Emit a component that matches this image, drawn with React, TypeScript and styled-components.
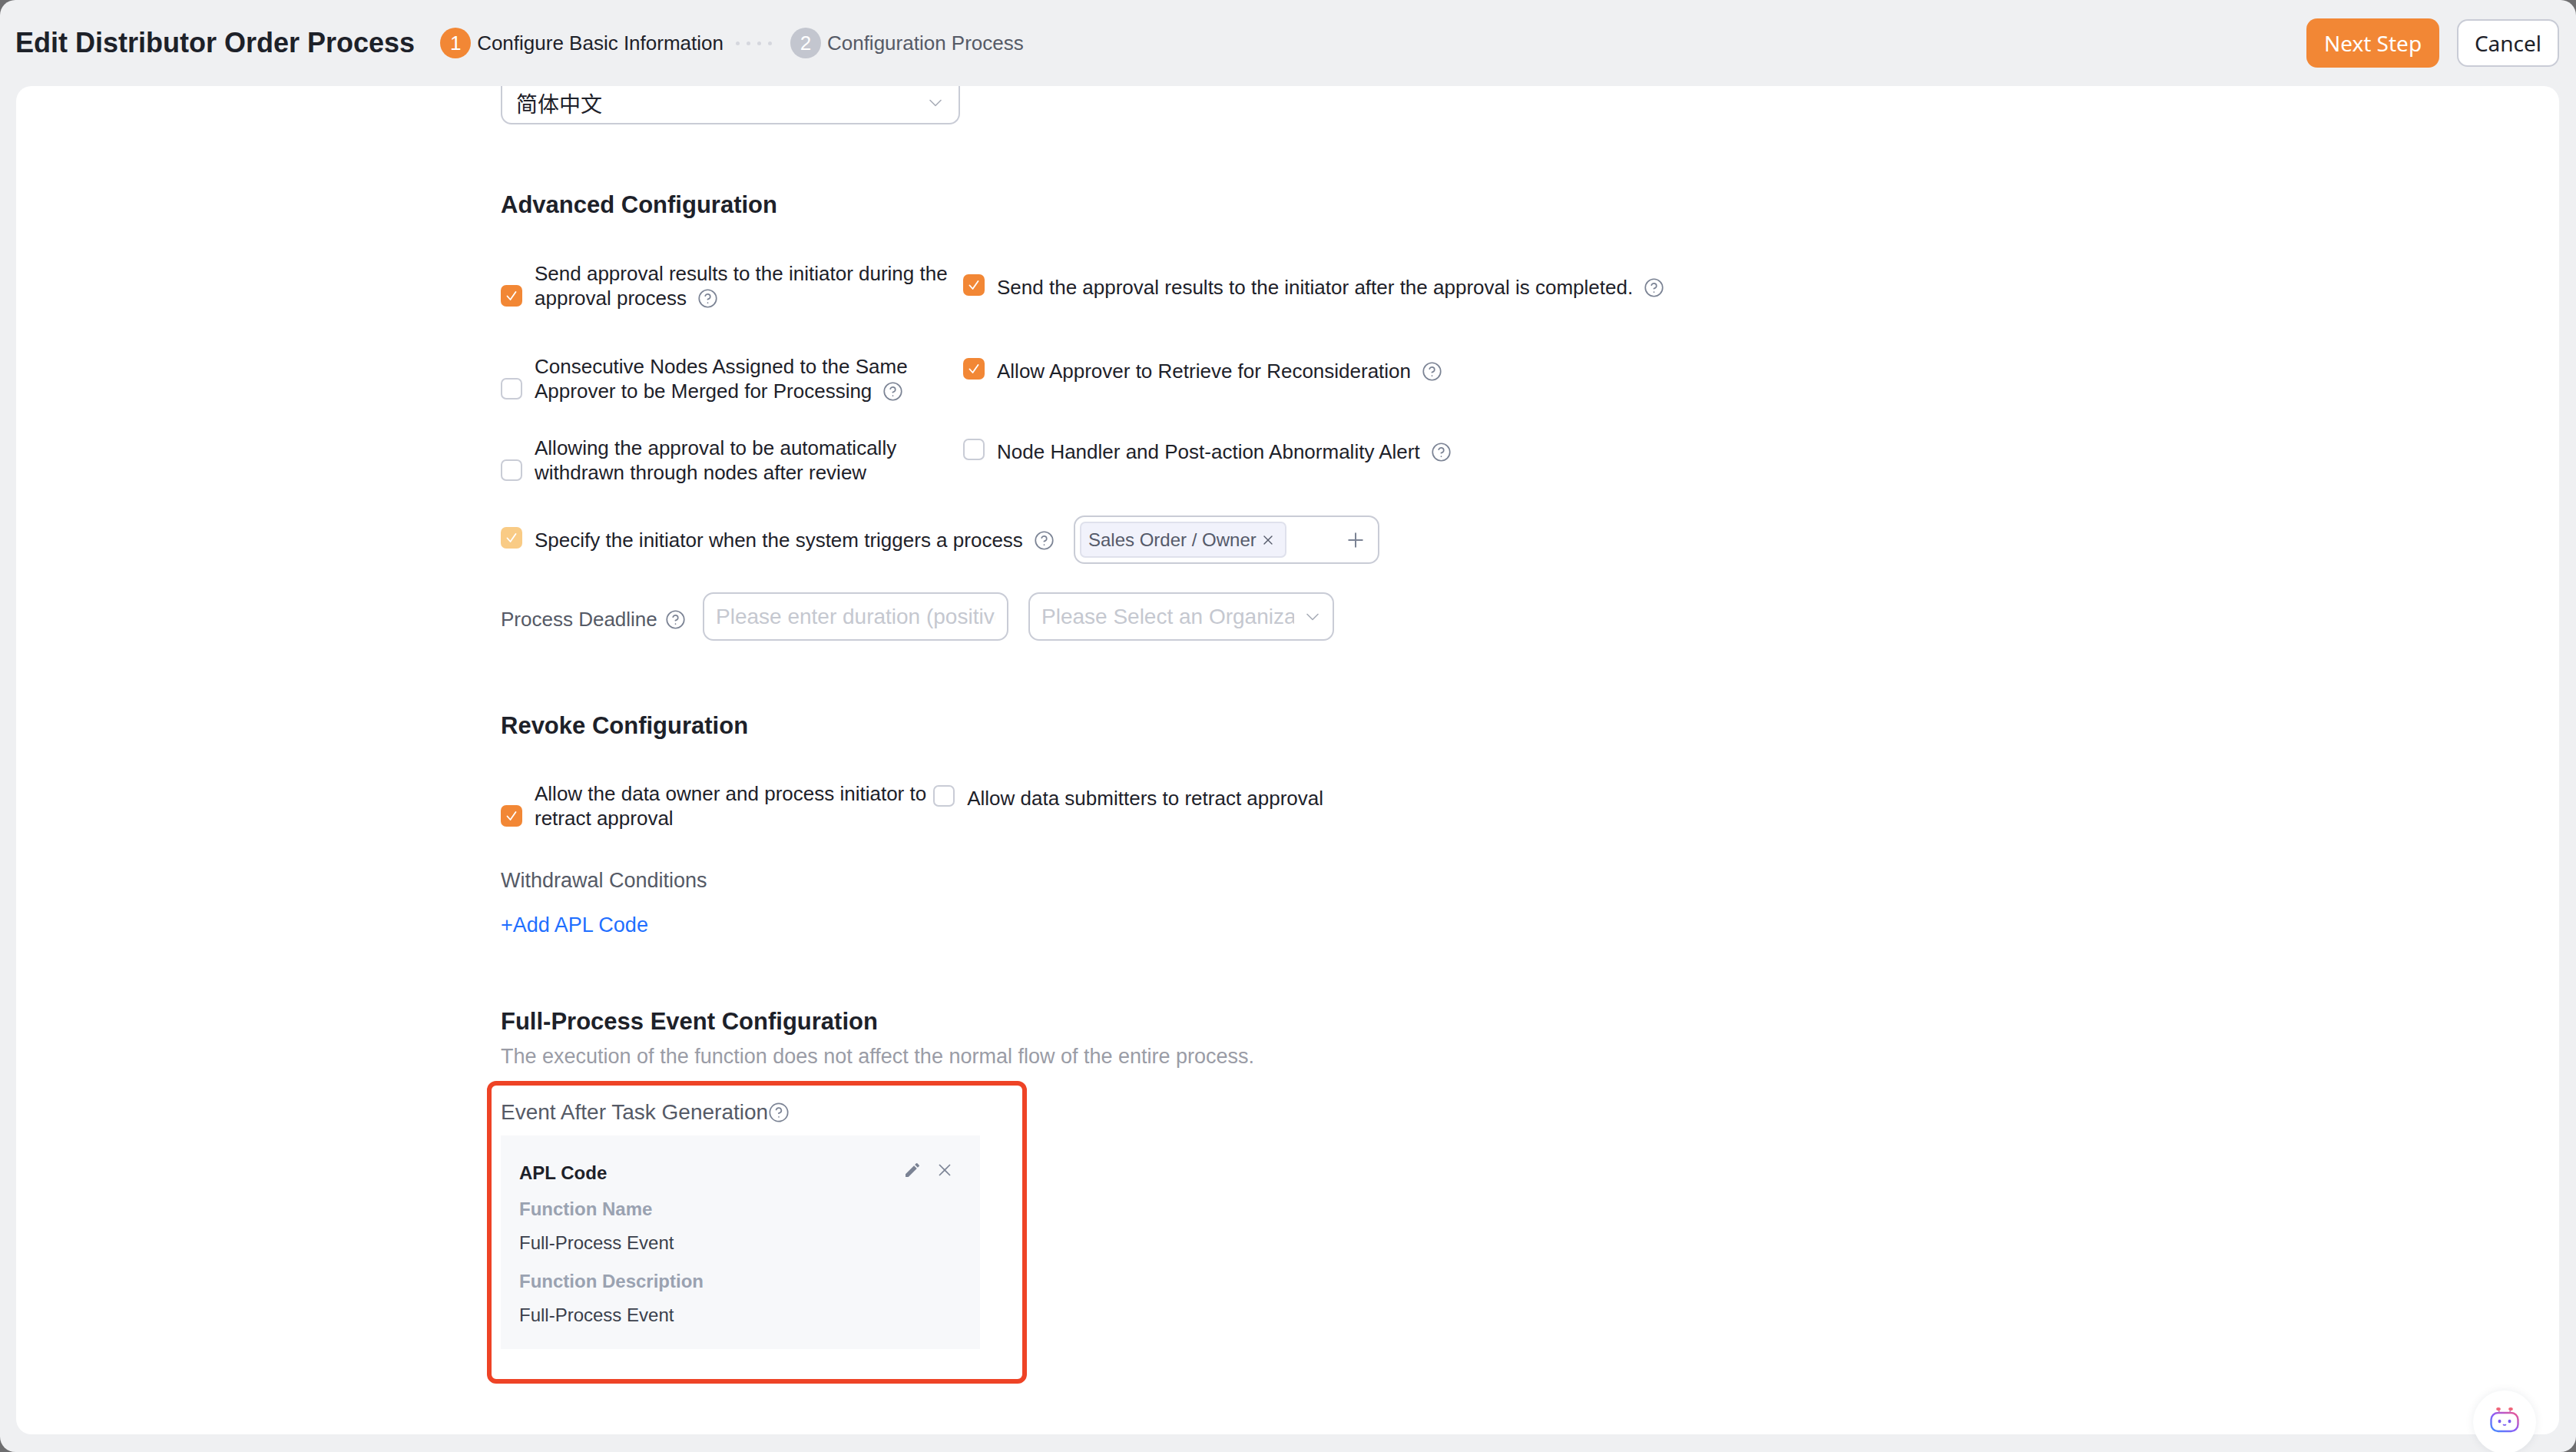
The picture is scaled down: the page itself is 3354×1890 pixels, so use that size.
import React from "react";
import styled, { createGlobalStyle } from "styled-components";
import { ChevronDown, CircleHelp, Plus, X } from "lucide-react";

const Global = createGlobalStyle`
  html, body { margin: 0; padding: 0; background: #6e6e70; }
  * { box-sizing: border-box; }
  #root { width: 3354px; height: 1890px; }
`;

const FONT = `"Liberation Sans", Arial, "Noto Sans CJK SC", sans-serif`;

const Win = styled.div`
  position: relative;
  width: 3354px;
  height: 1890px;
  background: #eff0f2;
  border-radius: 20px;
  overflow: hidden;
  font-family: ${FONT};
  font-size: 26px;
  color: #1d2129;
`;

const Header = styled.header`
  height: 112px;
  display: flex;
  align-items: center;
  padding: 0 22px 0 20px;
`;

const Title = styled.h1`
  margin: 0 33px 0 0;
  font-size: 36px;
  font-weight: 700;
  color: #1d2129;
  white-space: nowrap;
`;

const StepDot = styled.span<{ $active?: boolean }>`
  width: 40px;
  height: 40px;
  border-radius: 50%;
  display: flex;
  align-items: center;
  justify-content: center;
  margin-right: 8px;
  color: #fff;
  font-size: 26px;
  background: ${(p) => (p.$active ? "#f28735" : "#c3c6cf")};
`;

const StepLabel = styled.span<{ $active?: boolean }>`
  font-size: 26px;
  white-space: nowrap;
  color: ${(p) => (p.$active ? "#1d2129" : "#555a66")};
`;

const StepDots = styled.span`
  display: flex;
  gap: 9px;
  margin: 0 24px 0 16px;
  & > i {
    width: 5px;
    height: 5px;
    border-radius: 50%;
    background: #d5d7de;
  }
`;

const Actions = styled.div`
  margin-left: auto;
  display: flex;
  align-items: center;
  gap: 23px;
`;

const Primary = styled.button`
  width: 173px;
  height: 64px;
  border: none;
  border-radius: 14px;
  background: #f28735;
  color: #fff;
  font-family: "Noto Sans", sans-serif;
  font-size: 28px;
`;

const Secondary = styled.button`
  width: 133px;
  height: 62px;
  border: 2px solid #c9ccd6;
  border-radius: 14px;
  background: #fff;
  color: #1d2129;
  font-family: "Noto Sans", sans-serif;
  font-size: 28px;
`;

const Panel = styled.main`
  height: 1755px;
  margin: 0 22px 0 21px;
  padding-left: 631px;
  background: #fff;
  border-radius: 20px;
  overflow: hidden;
`;

const ClippedSelect = styled.div`
  width: 598px;
  height: 50px;
  display: flex;
  align-items: center;
  justify-content: space-between;
  padding: 0 16px 4px 18px;
  border: 2px solid #c9ccd6;
  border-top: none;
  border-radius: 0 0 14px 14px;
  font-size: 28px;
  color: #1d2129;
  & > svg { color: #a9adb8; }
`;

const Heading = styled.h2<{ $top: number }>`
  margin: ${(p) => p.$top}px 0 0;
  font-size: 31px;
  line-height: 44px;
  font-weight: 700;
  color: #1d2129;
`;

const CheckRow = styled.div<{ $top: number }>`
  display: flex;
  align-items: flex-start;
  margin-top: ${(p) => p.$top}px;
`;

const CheckItem = styled.div<{ $width?: number; $pad?: number }>`
  display: flex;
  align-items: flex-end;
  gap: 16px;
  flex: none;
  width: ${(p) => (p.$width ? `${p.$width}px` : "auto")};
  padding-top: ${(p) => p.$pad ?? 0}px;
`;

const Box = styled.span<{ $on?: boolean; $muted?: boolean }>`
  flex: none;
  width: 28px;
  height: 28px;
  margin-bottom: 5px;
  border-radius: 7px;
  display: flex;
  align-items: center;
  justify-content: center;
  border: 2px solid ${(p) => (p.$on ? "transparent" : "#c9ccd6")};
  background: ${(p) => (p.$on ? (p.$muted ? "#f9cb85" : "#f28735") : "#fff")};
  & > svg { display: block; }
`;

const CheckText = styled.span`
  line-height: 32px;
  font-size: 26px;
  color: #1d2129;
`;

const HelpIcon = styled(CircleHelp)<{ $left?: number }>`
  display: inline-block;
  vertical-align: -5px;
  width: 27px;
  height: 27px;
  margin-left: ${(p) => p.$left ?? 0}px;
  color: #7b8394;
  flex: none;
`;

const InitiatorRow = styled.div`
  display: flex;
  align-items: center;
  height: 63px;
  margin-top: 40px;
`;

const InitiatorItem = styled.div`
  display: flex;
  align-items: center;
  gap: 16px;
  width: 746px;
  & > span:first-child { margin-bottom: 0; margin-top: -6px; }
`;

const TagBox = styled.div`
  width: 398px;
  height: 63px;
  display: flex;
  align-items: center;
  justify-content: space-between;
  padding: 0 14px 0 6px;
  border: 2px solid #c9ccd6;
  border-radius: 14px;
  & > svg { color: #7b8394; }
`;

const Tag = styled.span`
  width: 269px;
  height: 47px;
  display: flex;
  align-items: center;
  justify-content: space-between;
  padding: 0 12px 0 9px;
  border: 2px solid #dfe1ec;
  border-radius: 7px;
  background: #f1f2fb;
  color: #555a6a;
  font-size: 24px;
  white-space: nowrap;
`;

const DeadlineRow = styled.div`
  display: flex;
  align-items: center;
  height: 63px;
  margin-top: 37px;
`;

const DeadlineLabel = styled.label`
  display: flex;
  align-items: center;
  width: 263px;
  padding-top: 8px;
  gap: 10px;
  color: #555a66;
  font-size: 26px;
  white-space: nowrap;
`;

const fieldCss = `
  width: 398px;
  height: 63px;
  border: 2px solid #c9ccd6;
  border-radius: 14px;
  background: #fff;
  font-size: 28px;
  color: #c5c8d0;
`;

const Field = styled.input`
  ${fieldCss}
  padding: 0 15px;
  font-family: ${FONT};
  &::placeholder { color: #c5c8d0; opacity: 1; }
`;

const PickerField = styled.div`
  ${fieldCss}
  margin-left: 26px;
  display: flex;
  align-items: center;
  gap: 10px;
  padding: 0 12px 0 15px;
  & > span { flex: 1; overflow: hidden; white-space: nowrap; }
  & > svg { color: #a9adb8; flex: none; }
`;

const Caption = styled.div<{ $top: number }>`
  margin-top: ${(p) => p.$top}px;
  line-height: 40px;
  font-size: 27px;
  color: #555a66;
`;

const AddLink = styled.a`
  display: block;
  margin-top: 18px;
  line-height: 40px;
  font-size: 27px;
  color: #1f6fff;
`;

const Description = styled.p`
  margin: 5px 0 0;
  line-height: 36px;
  font-size: 27px;
  color: #9a9ca6;
`;

const AnnotationFrame = styled.section`
  width: 703px;
  height: 394px;
  margin: 14px 0 0 -18px;
  padding: 15px 0 0 12px;
  border: 6px solid #ee4326;
  border-radius: 12px;
`;

const EventLabel = styled.div`
  display: flex;
  align-items: center;
  height: 40px;
  font-size: 28px;
  color: #555a66;
  & > svg { width: 28px; height: 28px; }
`;

const EventCard = styled.div`
  width: 624px;
  height: 278px;
  margin-top: 10px;
  padding: 31px 33px 0 24px;
  background: #f7f8fa;
`;

const CardHead = styled.div`
  display: flex;
  align-items: center;
  height: 36px;
  font-size: 24px;
  font-weight: 700;
  color: #1d2129;
`;

const CardTools = styled.div`
  margin-left: auto;
  margin-top: -8px;
  display: flex;
  align-items: center;
  gap: 17px;
  color: #7b8394;
`;

const FieldName = styled.div<{ $top: number }>`
  margin-top: ${(p) => p.$top}px;
  line-height: 36px;
  font-size: 24px;
  font-weight: 700;
  color: #9aa2b1;
`;

const FieldValue = styled.div`
  margin-top: 8px;
  line-height: 36px;
  font-size: 24px;
  color: #3a3f4b;
`;

const BotButton = styled.div`
  position: absolute;
  left: 3220px;
  top: 1810px;
  width: 82px;
  height: 82px;
  border-radius: 50%;
  display: flex;
  align-items: center;
  justify-content: center;
  background: #fff;
  box-shadow: 0 0 12px rgba(30, 40, 70, 0.08);
`;

const Tick = () => (
  <svg width="18" height="18" viewBox="0 0 18 18" fill="none">
    <path d="M3.5 9.5 7.5 14 14.5 4" stroke="#fff" strokeWidth="1.8" strokeLinecap="round" strokeLinejoin="round" />
  </svg>
);

const Check = ({ on, muted }: { on?: boolean; muted?: boolean }) => (
  <Box $on={on} $muted={muted}>{on ? <Tick /> : null}</Box>
);

const Pencil = () => (
  <svg width="24" height="24" viewBox="0 0 24 24" fill="currentColor">
    <path d="M3 17.25V21h3.75L17.81 9.94l-3.75-3.75L3 17.25zM20.71 7.04a1 1 0 0 0 0-1.41l-2.34-2.34a1 1 0 0 0-1.41 0l-1.83 1.83 3.75 3.75 1.83-1.83z" />
  </svg>
);

const Bot = () => (
  <svg width="38" height="34" viewBox="0 0 38 34" fill="none" style={{ marginTop: -6 }}>
    <defs>
      <linearGradient id="bot" x1="0" y1="1" x2="1" y2="0">
        <stop offset="0" stopColor="#3f8cff" />
        <stop offset="0.5" stopColor="#8f5cf5" />
        <stop offset="1" stopColor="#f0568c" />
      </linearGradient>
    </defs>
    <rect x="1.5" y="8" width="35" height="24" rx="9" stroke="url(#bot)" strokeWidth="2.4" />
    <path d="M11 3.5 12.5 8M27 3.5 25.5 8" stroke="#c76fb8" strokeWidth="1.4" />
    <ellipse cx="11" cy="3" rx="2.8" ry="2" fill="#f0657a" />
    <ellipse cx="27" cy="3" rx="2.8" ry="2" fill="#f0657a" />
    <ellipse cx="12.5" cy="19" rx="2" ry="2.3" fill="#7a5cf0" />
    <ellipse cx="25.5" cy="19" rx="2" ry="2.3" fill="#7a5cf0" />
    <path d="M17.5 23.5q1.5 1 3 0" stroke="#7a5cf0" strokeWidth="1.6" strokeLinecap="round" />
  </svg>
);

export default function App() {
  return (
    <>
      <Global />
      <Win>
        <Header>
          <Title>Edit Distributor Order Process</Title>
          <StepDot $active>1</StepDot>
          <StepLabel $active>Configure Basic Information</StepLabel>
          <StepDots><i /><i /><i /><i /></StepDots>
          <StepDot>2</StepDot>
          <StepLabel>Configuration Process</StepLabel>
          <Actions>
            <Primary>Next Step</Primary>
            <Secondary>Cancel</Secondary>
          </Actions>
        </Header>
        <Panel>
          <ClippedSelect>
            简体中文
            <ChevronDown size={28} strokeWidth={1.4} />
          </ClippedSelect>

          <Heading $top={83}>Advanced Configuration</Heading>

          <CheckRow $top={51}>
            <CheckItem $width={602}>
              <Check on />
              <CheckText>
                Send approval results to the initiator during the<br />
                approval process<HelpIcon $left={14} strokeWidth={1.5} />
              </CheckText>
            </CheckItem>
            <CheckItem $pad={17}>
              <Check on />
              <CheckText>
                Send the approval results to the initiator after the approval is completed.
                <HelpIcon $left={14} strokeWidth={1.5} />
              </CheckText>
            </CheckItem>
          </CheckRow>

          <CheckRow $top={57}>
            <CheckItem $width={602}>
              <Check />
              <CheckText>
                Consecutive Nodes Assigned to the Same<br />
                Approver to be Merged for Processing<HelpIcon $left={14} strokeWidth={1.5} />
              </CheckText>
            </CheckItem>
            <CheckItem $pad={5}>
              <Check on />
              <CheckText>
                Allow Approver to Retrieve for Reconsideration
                <HelpIcon $left={14} strokeWidth={1.5} />
              </CheckText>
            </CheckItem>
          </CheckRow>

          <CheckRow $top={42}>
            <CheckItem $width={602}>
              <Check />
              <CheckText>
                Allowing the approval to be automatically<br />
                withdrawn through nodes after review
              </CheckText>
            </CheckItem>
            <CheckItem $pad={4}>
              <Check />
              <CheckText>
                Node Handler and Post-action Abnormality Alert
                <HelpIcon $left={14} strokeWidth={1.5} />
              </CheckText>
            </CheckItem>
          </CheckRow>

          <InitiatorRow>
            <InitiatorItem>
              <Check on muted />
              <CheckText>
                Specify the initiator when the system triggers a process
                <HelpIcon $left={14} strokeWidth={1.5} />
              </CheckText>
            </InitiatorItem>
            <TagBox>
              <Tag>Sales Order / Owner<X size={20} strokeWidth={1.6} /></Tag>
              <Plus size={30} strokeWidth={1.6} />
            </TagBox>
          </InitiatorRow>

          <DeadlineRow>
            <DeadlineLabel>
              Process Deadline<HelpIcon strokeWidth={1.5} />
            </DeadlineLabel>
            <Field placeholder="Please enter duration (positive integer)" />
            <PickerField>
              <span>Please Select an Organization</span>
              <ChevronDown size={28} strokeWidth={1.4} />
            </PickerField>
          </DeadlineRow>

          <Heading $top={89}>Revoke Configuration</Heading>

          <CheckRow $top={50}>
            <CheckItem>
              <Check on />
              <CheckText>
                Allow the data owner and process initiator to<br />
                retract approval
              </CheckText>
            </CheckItem>
            <CheckItem $pad={5} style={{ marginLeft: 9 }}>
              <Check />
              <CheckText>Allow data submitters to retract approval</CheckText>
            </CheckItem>
          </CheckRow>

          <Caption $top={45}>Withdrawal Conditions</Caption>
          <AddLink>+Add APL Code</AddLink>

          <Heading $top={84}>Full-Process Event Configuration</Heading>
          <Description>The execution of the function does not affect the normal flow of the entire process.</Description>

          <AnnotationFrame>
            <EventLabel>
              Event After Task Generation<HelpIcon strokeWidth={1.5} />
            </EventLabel>
            <EventCard>
              <CardHead>
                APL Code
                <CardTools>
                  <Pencil />
                  <X size={26} strokeWidth={1.6} />
                </CardTools>
              </CardHead>
              <FieldName $top={11}>Function Name</FieldName>
              <FieldValue>Full-Process Event</FieldValue>
              <FieldName $top={14}>Function Description</FieldName>
              <FieldValue>Full-Process Event</FieldValue>
            </EventCard>
          </AnnotationFrame>
        </Panel>
        <BotButton><Bot /></BotButton>
      </Win>
    </>
  );
}
